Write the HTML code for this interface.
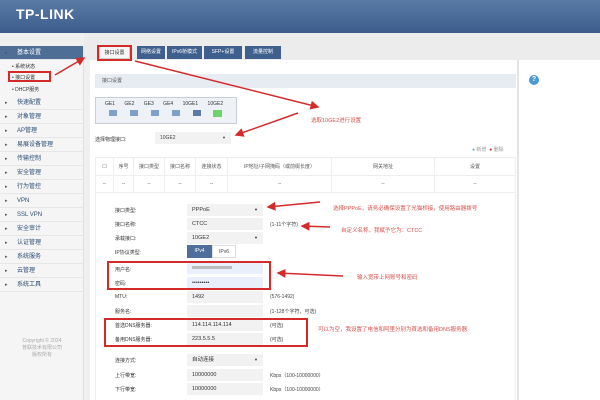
<!DOCTYPE html>
<html><head><meta charset="utf-8"><style>
*{margin:0;padding:0;box-sizing:border-box}
body{width:600px;height:400px;overflow:hidden;background:#f0f0f0;font-family:"Liberation Sans","Noto Sans CJK SC",sans-serif;position:relative;font-size:6px;color:#444}
.a{position:absolute}
.hdr{left:0;top:0;width:600px;height:33px;background:linear-gradient(#5a7aa6,#3c5d8c)}
.logo{left:16px;top:6px;color:#fff;font-weight:bold;font-size:14px;letter-spacing:0.5px}
.side{left:0;top:46px;width:84px;height:354px;background:#f5f5f5;border-right:1px solid #e0e0e0}
.si{position:absolute;left:0;width:83px;height:14px;border-bottom:1px solid #e6e6e6;font-size:6px;color:#2c4b75;padding-left:17px;line-height:14px}
.si:before{content:"▸";position:absolute;left:5px;font-size:5px;color:#555}
.sub{position:absolute;left:12px;font-size:5px;color:#333}
.main{left:90px;top:60px;width:428px;height:340px;background:#fff}
.tab{position:absolute;top:46px;height:13px;background:#3f5f8e;color:#fff;font-size:5px;line-height:13px;text-align:center}
.lbl{position:absolute;left:115px;font-size:5px;color:#333}
.inp{position:absolute;left:187px;width:76px;height:12px;background:#f2f2f2;font-size:5.5px;line-height:12px;padding-left:5px;color:#333}
.hint{position:absolute;left:270px;font-size:5px;color:#444}
.red{position:absolute;border:2px solid #d42a2a}
.rt{position:absolute;color:#d9504a;font-size:5.5px}
th,td{border-right:1px solid #eee;font-weight:normal;font-size:5px;text-align:center;color:#555}
</style></head><body>
<div class="a hdr"></div>
<div class="a logo">TP-LINK</div>
<div class="a" style="left:84px;top:33px;width:516px;height:27px;background:#ececec"></div>
<div class="a side"></div>
<div class="si" style="top:46px;background:#4f6e96;color:#fff">基本设置</div>
<div class="sub" style="top:63px">• 系统状态</div>
<div class="sub" style="top:74px">• 接口设置</div>
<div class="sub" style="top:86px">• DHCP服务</div>
<div class="si" style="top:96px">快速配置</div>
<div class="si" style="top:110px">对象管理</div>
<div class="si" style="top:124px">AP管理</div>
<div class="si" style="top:138px">易展设备管理</div>
<div class="si" style="top:152px">传输控制</div>
<div class="si" style="top:166px">安全管理</div>
<div class="si" style="top:180px">行为管控</div>
<div class="si" style="top:194px">VPN</div>
<div class="si" style="top:208px">SSL VPN</div>
<div class="si" style="top:222px">安全审计</div>
<div class="si" style="top:236px">认证管理</div>
<div class="si" style="top:250px">系统服务</div>
<div class="si" style="top:264px">云管理</div>
<div class="si" style="top:278px">系统工具</div>
<div class="a" style="left:14px;top:338px;font-size:5px;color:#aaa;text-align:center;width:56px;line-height:7px">Copyright © 2024<br>普联技术有限公司<br>版权所有</div>
<div class="a main"></div>
<div class="a" style="left:517px;top:60px;width:2px;height:340px;background:#e4e4e4"></div>
<div class="a" style="left:519px;top:60px;width:81px;height:340px;background:#fff"></div>
<div class="tab" style="left:99px;width:31px;background:#f5f5f5;color:#333;border:1px solid #ccc">接口设置</div>
<div class="tab" style="left:137px;width:28px">网络设置</div>
<div class="tab" style="left:167px;width:35px">IPv6桥模式</div>
<div class="tab" style="left:204px;width:38px">SFP+设置</div>
<div class="tab" style="left:245px;width:36px">流量控制</div>
<div class="a" style="left:95px;top:74px;width:421px;height:14px;background:#e6ecf2;font-size:5px;line-height:14px;padding-left:7px;color:#555">接口设置</div>
<div class="a" style="left:529px;top:75px;width:10px;height:10px;border-radius:50%;background:#4a9ad4;color:#fff;font-size:7px;text-align:center;line-height:10px;font-weight:bold">?</div>
<div class="a" style="left:95px;top:97px;width:142px;height:27px;background:#eef1f5;border:1px solid #c9cfd6"></div>
<div class="a" style="left:105px;top:101px;font-size:5px;color:#333;word-spacing:8px">GE1 GE2 GE3 GE4 10GE1 10GE2</div>
<div class="a" style="left:109px;top:110px;width:8px;height:6px;background:#7fa1c9"></div>
<div class="a" style="left:130px;top:110px;width:8px;height:6px;background:#7fa1c9"></div>
<div class="a" style="left:151px;top:110px;width:8px;height:6px;background:#7fa1c9"></div>
<div class="a" style="left:172px;top:110px;width:8px;height:6px;background:#7fa1c9"></div>
<div class="a" style="left:193px;top:110px;width:8px;height:6px;background:#5a7ba8"></div>
<div class="a" style="left:213px;top:110px;width:9px;height:7px;background:#6ed36a"></div>
<div class="a" style="left:95px;top:136px;font-size:5px;color:#333">选择物理接口:</div>
<div class="a" style="left:155px;top:132px;width:76px;height:12px;background:#f2f2f2;font-size:5px;line-height:12px;padding-left:5px">10GE2<span style="position:absolute;right:5px;font-size:4px">▼</span></div>
<div class="a" style="left:472px;top:146px;font-size:5px;color:#999"><span style="color:#6aaed6">●</span> 新增 &nbsp;<span style="color:#c33">●</span> 删除</div>
<table class="a" style="left:95px;top:157px;width:421px;height:36px;border-collapse:collapse;border:1px solid #eee">
<tr style="height:18px;border-bottom:1px solid #eee"><th style="width:18px">☐</th><th style="width:20px">序号</th><th style="width:31px">接口类型</th><th style="width:31px">接口名称</th><th style="width:32px">连接状态</th><th style="width:104px">IP地址/子网掩码（或前缀长度）</th><th style="width:103px">网关地址</th><th>设置</th></tr>
<tr><td>--</td><td>--</td><td>--</td><td>--</td><td>--</td><td>--</td><td>--</td><td>--</td></tr></table>
<div class="a" style="left:95px;top:193px;width:421px;height:207px;border-left:1px solid #eee;border-right:1px solid #eee"></div>
<div class="lbl" style="top:207px">接口类型:</div><div class="inp" style="top:204px">PPPoE<span style="position:absolute;right:5px;font-size:4px">▼</span></div>
<div class="lbl" style="top:221px">接口名称:</div><div class="inp" style="top:218px">CTCC</div><div class="hint" style="top:221px">(1-11个字符)</div>
<div class="lbl" style="top:235px">承载接口:</div><div class="inp" style="top:232px">10GE2<span style="position:absolute;right:5px;font-size:4px">▼</span></div>
<div class="lbl" style="top:249px">IP协议类型:</div>
<div class="a" style="left:187px;top:245px;width:25px;height:13px;background:#4f6e9c;color:#fff;font-size:5px;text-align:center;line-height:13px">IPv4</div>
<div class="a" style="left:212px;top:245px;width:24px;height:13px;border:1px solid #ddd;font-size:5px;text-align:center;line-height:12px">IPv6</div>
<div class="lbl" style="top:266px">用户名:</div><div class="inp" style="top:262px;background:#e9f0fb"><span style="display:inline-block;width:40px;height:3px;background:#bbb;vertical-align:middle"></span></div>
<div class="lbl" style="top:280px">密码:</div><div class="inp" style="top:277px;background:#e9f0fb">•••••••••</div>
<div class="lbl" style="top:294px">MTU:</div><div class="inp" style="top:291px">1492</div><div class="hint" style="top:294px">(576-1492)</div>
<div class="lbl" style="top:308px">服务名:</div><div class="inp" style="top:305px"></div><div class="hint" style="top:308px">(1-128个字符，可选)</div>
<div class="lbl" style="top:322px">首选DNS服务器:</div><div class="inp" style="top:319px">114.114.114.114</div><div class="hint" style="top:322px">(可选)</div>
<div class="lbl" style="top:336px">备用DNS服务器:</div><div class="inp" style="top:333px">223.5.5.5</div><div class="hint" style="top:336px">(可选)</div>
<div class="lbl" style="top:357px">连接方式:</div><div class="inp" style="top:354px">自动连接<span style="position:absolute;right:5px;font-size:4px">▼</span></div>
<div class="lbl" style="top:372px">上行带宽:</div><div class="inp" style="top:369px">10000000</div><div class="hint" style="top:372px">Kbps（100-10000000）</div>
<div class="lbl" style="top:386px">下行带宽:</div><div class="inp" style="top:383px">10000000</div><div class="hint" style="top:386px">Kbps（100-10000000）</div>
<div class="red" style="left:97px;top:45px;width:35px;height:16px"></div>
<div class="red" style="left:8px;top:71px;width:43px;height:11px"></div>
<div class="red" style="left:107px;top:261px;width:164px;height:29px"></div>
<div class="red" style="left:104px;top:318px;width:204px;height:29px"></div>
<div class="rt" style="left:311px;top:116px">选取10GE2进行设置</div>
<div class="rt" style="left:333px;top:204px">选择PPPoE，请务必确保设置了光猫桥接，使用路由器拨号</div>
<div class="rt" style="left:341px;top:226px">自定义名称，我赋予它为：CTCC</div>
<div class="rt" style="left:357px;top:273px">输入宽带上网账号和密码</div>
<div class="rt" style="left:318px;top:325px">可以为空，我设置了电信和阿里分别为首选和备用DNS服务器</div>
<svg class="a" style="left:0;top:0" width="600" height="400">
<defs><marker id="m" markerWidth="6" markerHeight="6" refX="5" refY="3" orient="auto"><path d="M0,0 L6,3 L0,6 z" fill="#d42a2a"/></marker></defs>
<g stroke="#d42a2a" stroke-width="1.5" fill="none" marker-end="url(#m)">
<line x1="55" y1="75" x2="84" y2="58"/>
<line x1="135" y1="61" x2="318" y2="107"/>
<line x1="298" y1="113" x2="236" y2="135"/>
<line x1="320" y1="202" x2="268" y2="207"/>
<line x1="330" y1="227" x2="302" y2="226"/>
<line x1="343" y1="276" x2="278" y2="273"/>
</g></svg>
</body></html>
